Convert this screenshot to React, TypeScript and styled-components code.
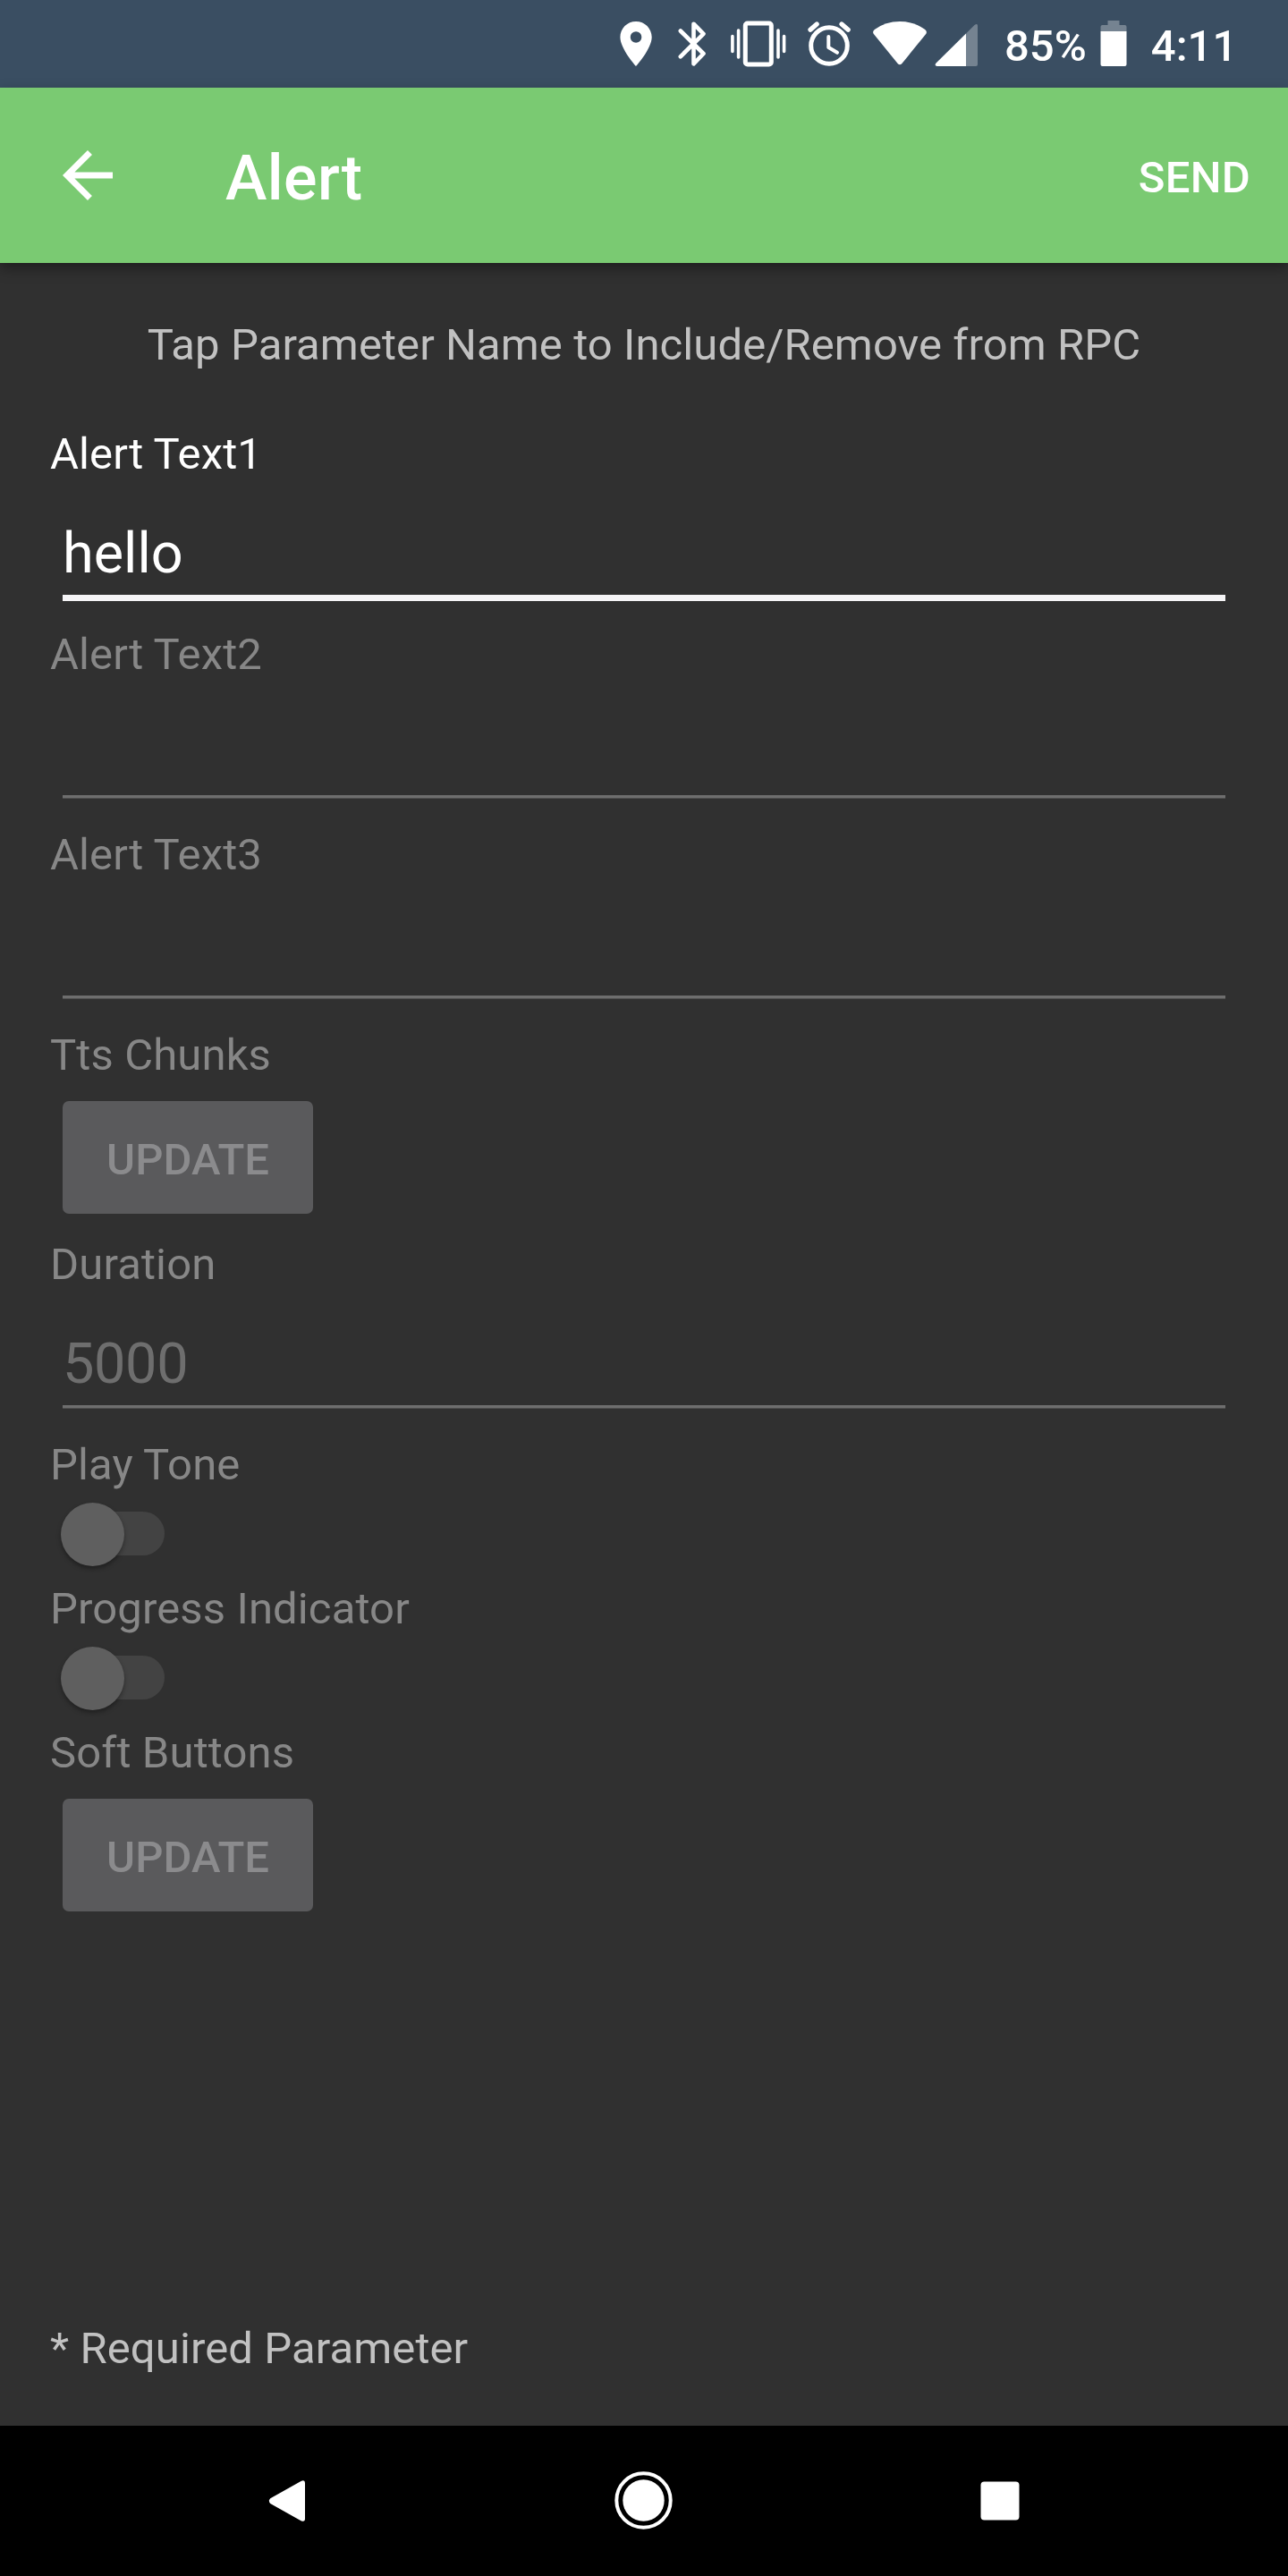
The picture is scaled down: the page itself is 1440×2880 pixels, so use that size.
import React from "react";
import styled, { createGlobalStyle } from "styled-components";

const GlobalStyle = createGlobalStyle`
  * { box-sizing: border-box; }
  body { margin: 0; background: #303030; }
`;

const Screen = styled.div`
  display: flex;
  flex-direction: column;
  width: 1440px;
  height: 2880px;
  background: #303030;
  font-family: Roboto, "Noto Sans", sans-serif;
  font-size: 49px;
  line-height: 66px;
  color: #fff;
  overflow: hidden;
`;

const StatusBar = styled.header`
  display: flex;
  flex: none;
  align-items: flex-start;
  height: 98px;
  padding-left: 680px;
  background: #3a4e62;
  font-weight: 500;
`;

const StatusIcons = styled.svg`
  flex: none;
  width: 420px;
  height: 98px;
`;

const StatusText = styled.span<{ $gap: number }>`
  margin-left: ${(p) => p.$gap}px;
  padding-top: 19px;
  white-space: nowrap;
`;

const BatteryIcon = styled.svg`
  flex: none;
  width: 30px;
  height: 98px;
  margin-left: 15px;
`;

const AppBar = styled.nav`
  display: flex;
  flex: none;
  align-items: center;
  height: 196px;
  padding: 0 42px 0 56px;
  background: #7aca72;
  box-shadow: 0 6px 14px rgba(0, 0, 0, 0.36);
`;

const BackIcon = styled.svg`
  width: 84px;
  height: 84px;
  fill: #fff;
`;

const Title = styled.h1`
  flex: 1;
  margin: 0 0 0 112px;
  padding-top: 6px;
  font-size: 70px;
  line-height: 82px;
  font-weight: 500;
  letter-spacing: 0.4px;
`;

const SendAction = styled.button`
  padding: 5px 0 0;
  border: 0;
  background: none;
  color: #fff;
  font: inherit;
  font-weight: 500;
  letter-spacing: 0.3px;
`;

const Content = styled.main`
  display: flex;
  flex: 1;
  flex-direction: column;
  padding: 58px 56px 53px;
`;

const Hint = styled.p`
  height: 66px;
  margin: 0 0 56px;
  line-height: 68px;
  letter-spacing: 0.08px;
  text-align: center;
  color: #c1c1c1;
`;

const Footnote = styled.p`
  margin: auto 0 0;
  letter-spacing: 0.1px;
  color: #c1c1c1;
`;

const Param = styled.section`
  display: flex;
  flex-direction: column;
  align-items: flex-start;
`;

const Label = styled.label<{ $active?: boolean }>`
  height: 66px;
  line-height: 68px;
  letter-spacing: 0.12px;
  color: ${(p) => (p.$active ? "#fff" : "#878787")};
`;

const Field = styled.div<{ $active?: boolean }>`
  align-self: stretch;
  height: 90px;
  margin: 42px 14px 26px;
  font-size: 63px;
  line-height: 74px;
  letter-spacing: ${(p) => (p.$active ? 0 : -0.35)}px;
  color: ${(p) => (p.$active ? "#fff" : "#6e6e6e")};
`;

const FieldText = styled.div`
  height: 83px;
`;

const Underline = styled.div<{ $active?: boolean }>`
  height: ${(p) => (p.$active ? 7 : 4)}px;
  background: ${(p) => (p.$active ? "#f5f4f6" : "linear-gradient(#6e6e6e 75%, #4f4f4f 75%)")};
`;

const UpdateButton = styled.button`
  width: 280px;
  height: 126px;
  margin: 19px 14px 23px;
  padding: 6px 0 0;
  border: 0;
  border-radius: 7px;
  background: #5a5a5c;
  color: #8b8b8d;
  font: inherit;
  font-weight: 500;
`;

const Track = styled.div`
  display: flex;
  align-items: center;
  width: 112px;
  height: 49px;
  margin: 20px 16px 26px;
  border-radius: 25px;
  background: #434343;
`;

const Thumb = styled.div`
  flex: none;
  width: 71px;
  height: 71px;
  margin: 2px 0 0 -4px;
  border-radius: 50%;
  background: #5f5f5f;
  box-shadow: 0 3px 5px rgba(0, 0, 0, 0.35);
`;

const NavBar = styled.footer`
  flex: none;
  height: 168px;
  background: #000;
`;

const NavIcons = styled.svg`
  display: block;
  width: 1440px;
  height: 168px;
  fill: #fff;
`;

function TextParam({ name, value = "", active = false }: { name: string; value?: string; active?: boolean }) {
  return (
    <Param>
      <Label $active={active}>{name}</Label>
      <Field $active={active}>
        <FieldText>{value}</FieldText>
        <Underline $active={active} />
      </Field>
    </Param>
  );
}

function ButtonParam({ name }: { name: string }) {
  return (
    <Param>
      <Label>{name}</Label>
      <UpdateButton>UPDATE</UpdateButton>
    </Param>
  );
}

function SwitchParam({ name }: { name: string }) {
  return (
    <Param>
      <Label>{name}</Label>
      <Track>
        <Thumb />
      </Track>
    </Param>
  );
}

export default function App() {
  return (
    <Screen>
      <GlobalStyle />
      <StatusBar>
        <StatusIcons viewBox="680 0 420 98" fill="#fff">
          <path transform="translate(680.8 19) scale(2.52 2.5)" d="M12 2C8.13 2 5 5.13 5 9c0 5.25 7 13 7 13s7-7.75 7-13c0-3.87-3.13-7-7-7zm0 9.5a2.5 2.5 0 1 1 0-5 2.5 2.5 0 0 1 0 5z" />
          <g fill="none" stroke="#fff" strokeLinecap="round" strokeLinejoin="round">
            <path strokeWidth="4.6" d="M760.8 34.5 786.5 60 775.5 71.3V26.7L786.5 37.8 760.8 63.3" />
            <rect strokeWidth="5" x="833.3" y="26" width="29" height="46" rx="2.5" />
            <path strokeWidth="3.6" d="M825.6 34V64M818.9 40.5V57.5M870 34V64M876.6 40.5V57.5" />
            <circle strokeWidth="5" cx="927" cy="51" r="20.3" />
            <path strokeWidth="4" d="M926.3 41V53L936 58.8" />
            <path strokeWidth="5.2" d="M906 33.2 913.2 27M941 27 948.2 33.2" />
          </g>
          <path d="M1003.8 71.2 976.8 38Q975 35.3 977.8 33Q990 24 1006 24Q1022 24 1034.2 33Q1037 35.3 1035.2 38L1008.2 71.2Q1006 73.5 1003.8 71.2Z" />
          <path fillOpacity=".3" d="M1080 37.5 1089.5 28Q1093 25.5 1093 29V72Q1093 74 1091 74H1080Z" />
          <path d="M1080 37.5V74H1047.5Q1044.5 73.5 1046.3 70.8Z" />
        </StatusIcons>
        <StatusText $gap={23}>85%</StatusText>
        <BatteryIcon viewBox="0 0 30 98" fill="#fff">
          <path fillOpacity=".3" d="M8.5 23H21.5V28H27.5Q29.5 28 29.5 30V35H.5V30Q.5 28 2.5 28H8.5Z" />
          <path d="M.5 35H29.5V72Q29.5 74 27.5 74H2.5Q.5 74 .5 72Z" />
        </BatteryIcon>
        <StatusText $gap={27}>4:11</StatusText>
      </StatusBar>
      <AppBar>
        <BackIcon viewBox="0 0 24 24">
          <path d="M20 11H7.83l5.59-5.59L12 4l-8 8 8 8 1.41-1.41L7.83 13H20v-2z" />
        </BackIcon>
        <Title>Alert</Title>
        <SendAction>SEND</SendAction>
      </AppBar>
      <Content>
        <Hint>Tap Parameter Name to Include/Remove from RPC</Hint>
        <TextParam name="Alert Text1" value="hello" active />
        <TextParam name="Alert Text2" />
        <TextParam name="Alert Text3" />
        <ButtonParam name="Tts Chunks" />
        <TextParam name="Duration" value="5000" />
        <SwitchParam name="Play Tone" />
        <SwitchParam name="Progress Indicator" />
        <ButtonParam name="Soft Buttons" />
        <Footnote>* Required Parameter</Footnote>
      </Content>
      <NavBar>
        <NavIcons viewBox="0 2712 1440 168">
          <path d="M302.2 2793.2 336.5 2774Q341 2772 341 2776V2816Q341 2820 336.5 2818.2L302.2 2799Q299.5 2796 302.2 2793.2Z" />
          <circle cx="719.5" cy="2795.5" r="30.2" fill="none" stroke="#fff" strokeWidth="4" />
          <circle cx="719.5" cy="2795.5" r="23.2" />
          <rect x="1096.5" y="2774.5" width="43" height="43" rx="4" />
        </NavIcons>
      </NavBar>
    </Screen>
  );
}
